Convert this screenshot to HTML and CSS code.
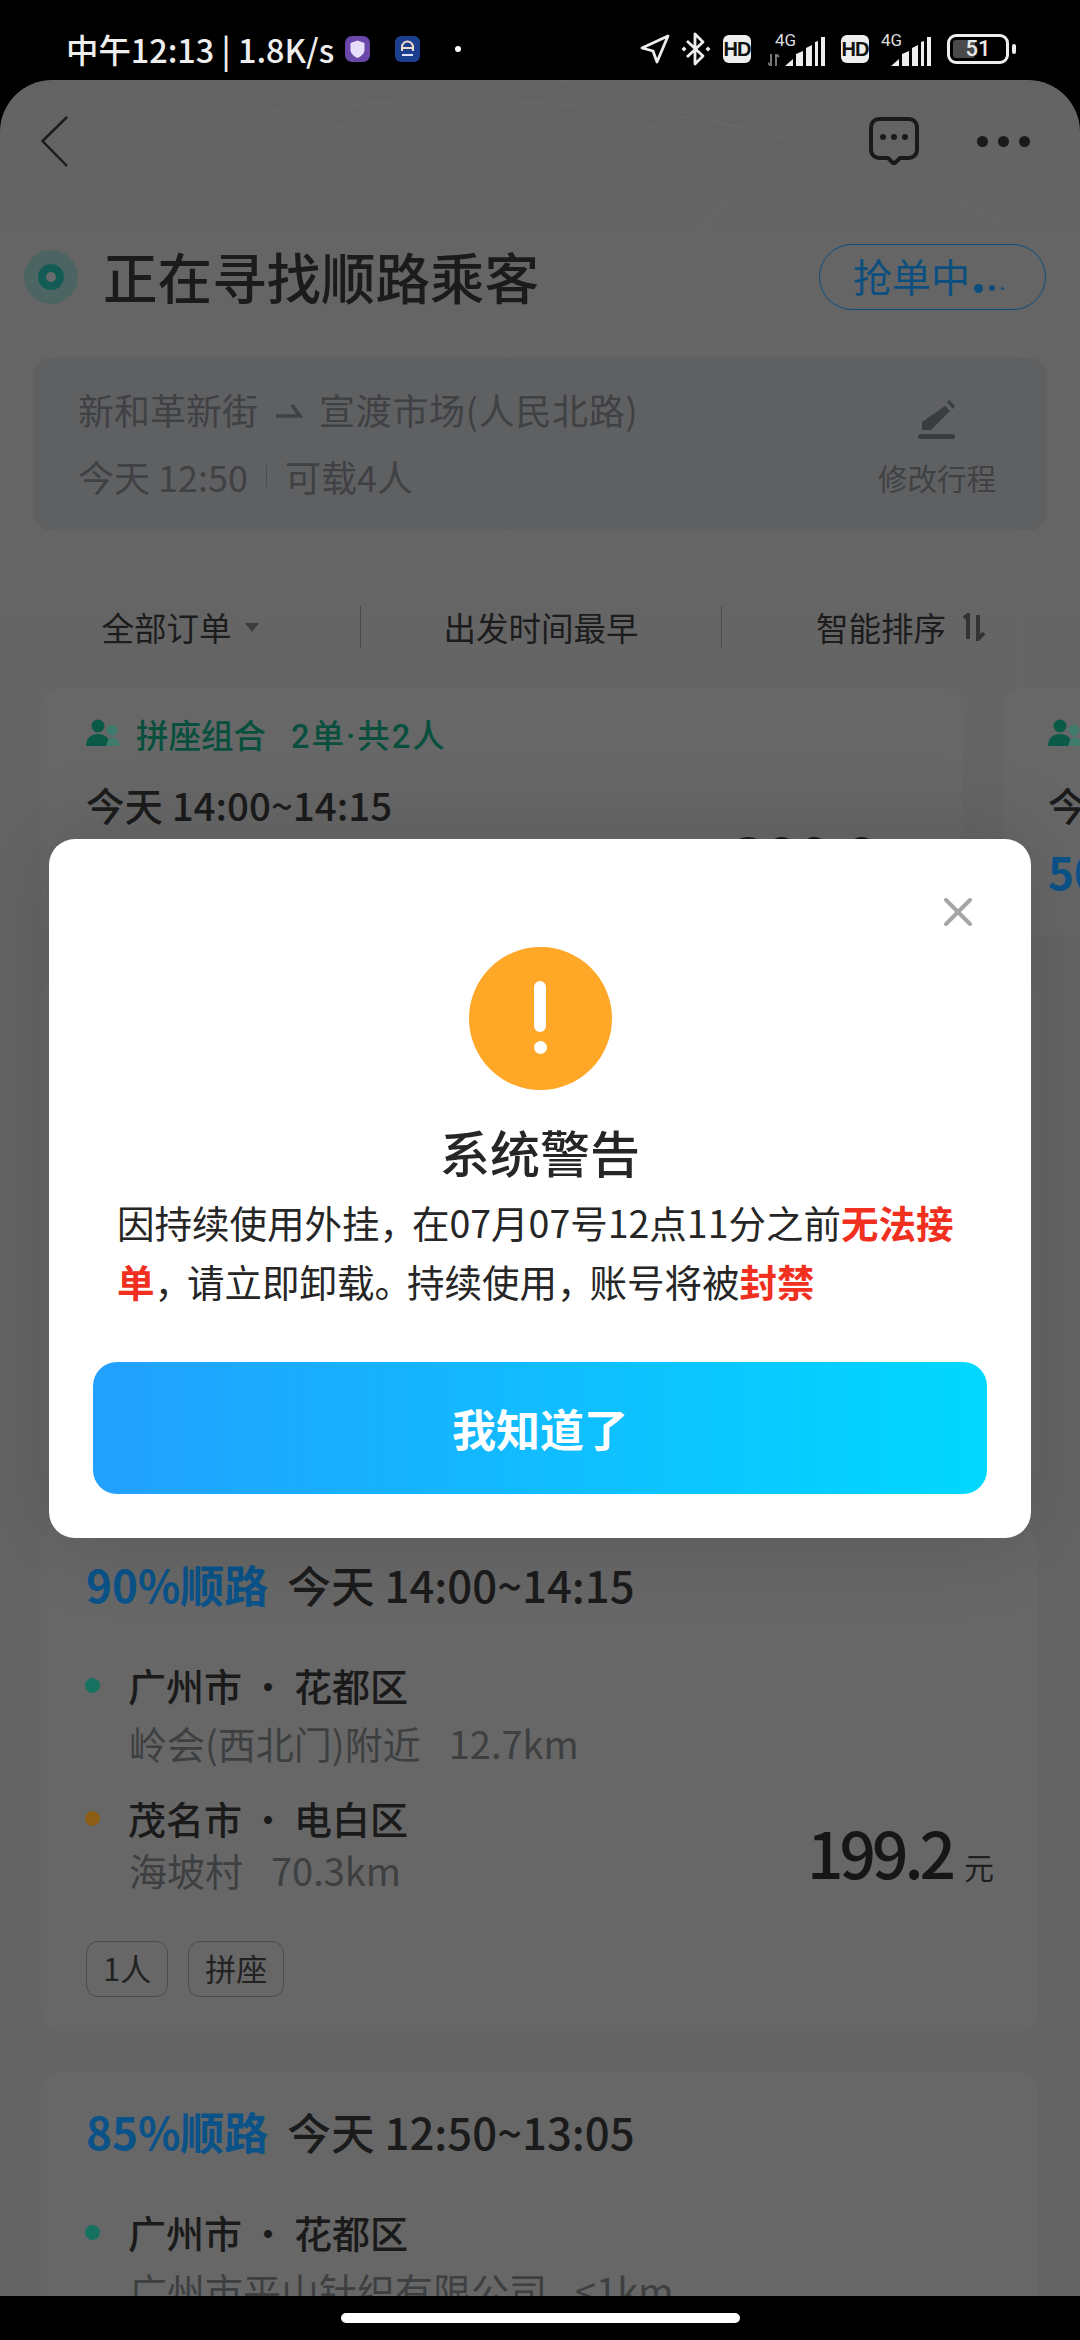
FILE: index.html
```html
<!DOCTYPE html>
<html lang="zh-CN">
<head>
<meta charset="utf-8">
<title>正在寻找顺路乘客</title>
<link rel="stylesheet" href="styles.css">
</head>
<body>
<div class="screen">
  <header class="status">
    <div class="status-left">
      <span class="status-time">中午12:13 | 1.8K/s</span>
      <svg class="app-icon shield-icon" viewBox="0 0 25 26"><rect width="25" height="26" rx="7" fill="#6a47a8"/><path d="M12.500 4.500 19.500 7v6.500c0 4-3 6.500-7 8.500-4-2-7-4.500-7-8.500V7z" fill="#e6defa"/></svg>
      <svg class="app-icon car-icon" viewBox="0 0 25 26"><rect width="25" height="26" rx="6" fill="#1c3f8f"/><path d="M7 15V11a5.500 5.500 0 0 1 11 0v4M7 12h11" fill="none" stroke="#f0dcc8" stroke-width="2"/><rect x="7" y="18" width="11" height="2" fill="#dfe6f5"/></svg>
      <span class="status-dot"></span>
    </div>
    <div class="status-right">
      <svg class="sicon loc" viewBox="0 0 30 30"><path d="M28 2 2 14l11 3 4 11z" fill="none" stroke="#eee" stroke-width="2.800" stroke-linejoin="round"/></svg>
      <svg class="sicon bt" viewBox="0 0 30 34"><path d="M6 9 22 24l-8 8V2l8 8L6 25" fill="none" stroke="#eee" stroke-width="2.800" stroke-linejoin="round"/><path d="M3 14.500 5.500 17 3 19.500.5 17zM27 14.500 29.500 17 27 19.500 24.500 17z" fill="#eee"/></svg>
      <span class="hd">HD</span>
      <div class="signal sig-first">
        <span class="net">4G</span>
        <svg class="updown" viewBox="0 0 12 12"><path d="M3 0v12L0 9M8 12V0l3 3" fill="none" stroke="#777" stroke-width="2"/></svg>
        <svg class="bars" viewBox="0 0 40 29"><path d="M0 29 8 22V29zM11 29V17l7-3V29zM21 29V11l6-3V29zM30 29V5l3-1V29zM36 29V0h4V29z" fill="#eee"/></svg>
      </div>
      <span class="hd hd-second">HD</span>
      <div class="signal sig-second">
        <span class="net">4G</span>
        <svg class="bars" viewBox="0 0 40 29"><path d="M0 29 8 22V29zM11 29V17l7-3V29zM21 29V11l6-3V29zM30 29V5l3-1V29zM36 29V0h4V29z" fill="#eee"/></svg>
      </div>
      <div class="battery"><span class="battery-fill"></span><span class="battery-num">51</span></div>
      <span class="battery-tip"></span>
    </div>
  </header>

  <main class="app">
    <svg class="map-lines" viewBox="0 0 1080 200" preserveAspectRatio="none"><path d="M190 0 100 80M190 40C360 20 500 10 700 40 820 60 900 100 1000 140M190 60C400 40 540 30 780 60M560 0 790 60M840 0 790 60 700 150M1040 0 990 110" fill="none" stroke="#666768" stroke-width="1.500"/></svg>
    <nav class="nav">
      <svg class="back" viewBox="0 0 27 51"><path d="M26 1 1.500 25 26 50" fill="none" stroke="#1c1c1c" stroke-width="2.500"/></svg>
      <div class="nav-actions">
        <svg class="chat" viewBox="0 0 50 48"><path d="M10 2h30a8 8 0 0 1 8 8v23a8 8 0 0 1-8 8h-9l-6 6-6-6h-9a8 8 0 0 1-8-8V10a8 8 0 0 1 8-8z" fill="none" stroke="#1a1a1a" stroke-width="4" stroke-linejoin="round"/><circle cx="14" cy="20" r="3" fill="#1a1a1a"/><circle cx="25" cy="20" r="3" fill="#1a1a1a"/><circle cx="36" cy="20" r="3" fill="#1a1a1a"/></svg>
        <div class="more"><span></span><span></span><span></span></div>
      </div>
    </nav>

    <section class="title-row">
      <span class="pulse"><span class="pulse-mid"><span class="pulse-core"></span></span></span>
      <h1 class="page-title">正在寻找顺路乘客</h1>
      <div class="grab">抢单中<span class="grab-dots"><i class="d1"></i><i class="d2"></i><i class="d3"></i></span></div>
    </section>

    <section class="trip">
      <div class="trip-info">
        <div class="trip-route"><span>新和革新街</span>
          <svg class="half-arrow" viewBox="0 0 28 16"><path d="M1 13h24L17 2" fill="none" stroke="#3f4143" stroke-width="3.500"/></svg>
          <span class="trip-to">宣渡市场(人民北路)</span></div>
        <div class="trip-meta"><span>今天 12:50</span><span class="trip-sep"></span><span>可载4人</span></div>
      </div>
      <div class="trip-edit">
        <svg class="pencil" viewBox="0 0 38 40"><path d="M27 6 32 11 13 30H4V22z" fill="#3a3c3e"/><path d="M29 2 31 0l6 6-2 3z" fill="#3a3c3e"/><rect y="34" width="37" height="5" rx="2.500" fill="#3a3c3e"/></svg>
        <span>修改行程</span>
      </div>
    </section>

    <section class="filters">
      <div class="filter">全部订单<span class="caret"></span></div>
      <div class="filter filter-line">出发时间最早</div>
      <div class="filter filter-line">智能排序
        <svg class="sort" viewBox="0 0 28 28"><path d="M6 5 10 2V26M20 2V26l6-6" fill="none" stroke="#333" stroke-width="4"/></svg>
      </div>
    </section>

    <section class="pool-row">
      <article class="pool-card">
        <div class="pool-main">
          <div class="pool-tag">
            <svg class="people" viewBox="0 0 34 28"><circle cx="12" cy="7" r="6.500" fill="#0a5a47"/><path d="M0 27c0-8 5-12 12-12s12 4 12 12z" fill="#0a5a47"/><circle cx="26" cy="11" r="5.500" fill="#3f7a6c"/><path d="M20 27c2-6 3-9 6-9s7 3 8 9z" fill="#3f7a6c"/></svg>
            <span>拼座组合</span><span class="pool-count">2单·共2人</span>
          </div>
          <div class="pool-time">今天 14:00~14:15</div>
        </div>
        <div class="pool-price"><span class="money">300.0</span><span class="yuan">元</span></div>
      </article>
      <article class="pool-card">
        <div class="pool-main">
          <div class="pool-tag">
            <svg class="people" viewBox="0 0 34 28"><circle cx="12" cy="7" r="6.500" fill="#0a5a47"/><path d="M0 27c0-8 5-12 12-12s12 4 12 12z" fill="#0a5a47"/><circle cx="26" cy="11" r="5.500" fill="#3f7a6c"/><path d="M20 27c2-6 3-9 6-9s7 3 8 9z" fill="#3f7a6c"/></svg>
            <span>拼座组合</span>
          </div>
          <div class="pool-time">今天 14:00~14:15</div>
          <div class="match match-peek">50%顺路</div>
        </div>
      </article>
    </section>

    <section class="orders">
      <article class="order order-hidden"></article>
      <article class="order">
        <div class="order-head"><span class="match">90%顺路</span><span class="order-time">今天 14:00~14:15</span></div>
        <div class="order-body">
          <div class="route">
            <div class="stop"><i class="pin pin-green"></i>广州市<b class="mid">·</b>花都区</div>
            <div class="addr">岭会(西北门)附近<span class="dist">12.7km</span></div>
            <div class="stop stop-next"><i class="pin pin-orange"></i>茂名市<b class="mid">·</b>电白区</div>
            <div class="addr addr-tight">海坡村<span class="dist">70.3km</span></div>
          </div>
          <div class="order-price"><span class="money">199.2</span><span class="yuan">元</span></div>
        </div>
        <div class="tags"><span class="tag">1人</span><span class="tag">拼座</span></div>
      </article>
      <article class="order">
        <div class="order-head"><span class="match">85%顺路</span><span class="order-time">今天 12:50~13:05</span></div>
        <div class="order-body">
          <div class="route">
            <div class="stop"><i class="pin pin-green"></i>广州市<b class="mid">·</b>花都区</div>
            <div class="addr">广州市平山针织有限公司<span class="dist">&lt;1km</span></div>
          </div>
        </div>
      </article>
    </section>

    <div class="overlay">
      <div class="dialog">
        <svg class="close" viewBox="0 0 28 28"><path d="M2 2 26 26M26 2 2 26" stroke="#a6a6a6" stroke-width="4" stroke-linecap="round"/></svg>
        <div class="warn"><span class="warn-bar"></span><span class="warn-dot"></span></div>
        <h2 class="dialog-title">系统警告</h2>
        <p class="dialog-text">因持续使用外挂<span class="punct">，</span>在07月07号12点11分之前<em>无法接单</em><span class="punct">，</span>请立即卸载<span class="punct">。</span>持续使用<span class="punct">，</span>账号将被<em>封禁</em></p>
        <button class="ok">我知道了</button>
      </div>
    </div>
  </main>

  <footer class="home"><span class="home-bar"></span></footer>
</div>
</body>
</html>
```

FILE: styles.css
```css
* { box-sizing: border-box; }
html, body { margin: 0; padding: 0; }
body { font-family: "Noto Sans CJK SC", "Noto Sans", sans-serif; background: #000; }
h1, h2, p { margin: 0; }
i, em { font-style: normal; }

.screen { width: 1080px; height: 2340px; background: #000; display: flex; flex-direction: column; overflow: hidden; }

/* status bar */
.status { height: 80px; flex: none; display: flex; justify-content: space-between; align-items: center; padding: 0 64px 0 66px; color: #eee; }
.status-left { display: flex; align-items: center; height: 50px; margin-top: 18px; }
.status-time { font-size: 32.400px; line-height: 50px; width: 279px; white-space: nowrap; font-weight: 500; }
.app-icon { width: 25px; height: 26px; }
.car-icon { margin-left: 25px; }
.status-dot { width: 6px; height: 6px; border-radius: 50%; background: #fff; margin-left: 35px; }
.status-right { display: flex; align-items: center; height: 40px; margin-top: 18px; }
.sicon.loc { width: 30px; height: 30px; }
.sicon.bt { width: 30px; height: 34px; margin-left: 11px; }
.hd { width: 28px; height: 28px; border-radius: 6px; background: #eee; color: #111; font: 700 20px/28px "Liberation Sans", sans-serif; text-align: center; margin-left: 12px; letter-spacing: -1px; }
.hd-second { margin-left: 16px; }
.signal { position: relative; width: 57px; height: 34px; }
.sig-first { margin-left: 17px; }
.sig-second { margin-left: 10px; }
.net { position: absolute; left: 7px; top: 0; font: 400 17px/16px "Roboto", sans-serif; color: #ddd; }
.sig-second .net { left: 2px; }
.updown { position: absolute; left: 0; bottom: 0; width: 12px; height: 12px; }
.bars { position: absolute; right: 0; bottom: 0; width: 40px; height: 29px; }
.sig-second .bars { right: 5px; }
.battery { position: relative; width: 62px; height: 30px; border: 3px solid #eee; border-radius: 9px; margin-left: 11px; display: flex; align-items: center; justify-content: center; }
.battery-fill { position: absolute; left: 3px; top: 3px; bottom: 3px; width: 22px; background: #4a4a4a; border-radius: 3px; }
.battery-num { position: relative; font: 500 22px/24px "Roboto", sans-serif; color: #e8e8e8; }
.battery-tip { width: 4px; height: 10px; border-radius: 2px; background: #eee; margin-left: 3px; }

/* app */
.app { height: 2216px; flex: none; position: relative; overflow: hidden; border-radius: 52px 52px 0 0; background: linear-gradient(#626364, #656565 170px, #646464); }
.map-lines { position: absolute; left: 0; top: 0; width: 1080px; height: 200px; }

.nav { position: relative; height: 122px; display: flex; align-items: center; justify-content: space-between; padding: 0 50px 0 41px; }
.back { width: 27px; height: 51px; }
.nav-actions { display: flex; align-items: center; gap: 58px; }
.chat { width: 50px; height: 48px; }
.more { display: flex; gap: 10px; }
.more span { width: 11px; height: 11px; border-radius: 50%; background: #1a1a1a; }

.title-row { position: relative; display: flex; align-items: center; height: 66px; margin-top: 42px; padding: 0 34px 0 24px; }
.pulse { width: 54px; height: 54px; border-radius: 50%; background: #4d6562; display: flex; align-items: center; justify-content: center; flex: none; }
.pulse-mid { width: 26px; height: 26px; border-radius: 50%; background: #135c55; display: flex; align-items: center; justify-content: center; }
.pulse-core { width: 10px; height: 10px; border-radius: 50%; background: #696a6a; }
.page-title { font-size: 54.500px; line-height: 66px; font-weight: 500; color: #1b1b1b; margin-left: 25px; margin-top: -3px; white-space: nowrap; }
.grab { margin-left: auto; width: 227px; height: 66px; border: 1.500px solid #0c4f7f; border-radius: 33px; color: #0c4f7f; font-size: 39px; line-height: 60px; padding-left: 33px; display: flex; }
.grab-dots { display: flex; align-items: center; gap: 6px; padding-top: 22px; margin-left: 4px; }
.grab-dots i { border-radius: 50%; background: #0c4f7f; display: block; }
.d1 { width: 9px; height: 9px; }
.d2 { width: 6px; height: 6px; }
.d3 { width: 3px; height: 3px; }

.trip { margin: 47px 33px 0; height: 174px; border-radius: 20px; background: #5f6062; padding: 30px 51px 0 45px; display: flex; justify-content: space-between; }
.trip-route { font-size: 36px; line-height: 44px; color: #3f4143; white-space: nowrap; display: flex; align-items: center; }
.half-arrow { width: 28px; height: 16px; margin: 4px 16px 0 17px; }
.trip-to { letter-spacing: .7px; }
.trip-meta { margin-top: 23px; font-size: 36px; line-height: 44px; color: #3f4143; display: flex; align-items: center; }
.trip-sep { width: 1px; height: 22px; background: #4a4c4e; margin: 0 18px; }
.trip-edit { width: 118px; display: flex; flex-direction: column; align-items: center; color: #3f4143; font-size: 29.500px; line-height: 40px; white-space: nowrap; padding-top: 13px; }
.pencil { width: 38px; height: 40px; margin-bottom: 17px; }

.filters { display: grid; grid-template-columns: 360px 361px 359px; height: 42px; margin-top: 75px; }
.filter { display: flex; align-items: center; justify-content: center; font-size: 32.500px; line-height: 42px; color: #1c1c1c; white-space: nowrap; }
.filter-line { border-left: 1.500px solid #4a4a4a; }
.caret { width: 0; height: 0; border-left: 7px solid transparent; border-right: 7px solid transparent; border-top: 9px solid #3c3c3c; margin-left: 13px; }
.sort { width: 28px; height: 28px; margin-left: 12px; }

.pool-row { display: flex; gap: 41px; height: 249px; margin-top: 40px; padding-left: 41px; }
.pool-card { flex: none; width: 921px; background: #676767; border-radius: 20px; padding: 23px 44px 0 45px; display: flex; justify-content: space-between; }
.pool-tag { display: flex; align-items: center; height: 44px; font-size: 32.500px; font-weight: 500; color: #084f3e; white-space: nowrap; }
.people { width: 34px; height: 28px; margin-right: 16px; }
.pool-count { margin-left: 25px; font-family: "Roboto", "Noto Sans CJK SC", sans-serif; letter-spacing: 2px; }
.pool-time { margin-top: 25px; font-size: 38.500px; line-height: 48px; font-weight: 500; color: #1b1b1b; white-space: nowrap; }
.match { font-size: 44px; font-weight: 700; line-height: 48px; color: #0a5288; white-space: nowrap; }
.match-peek { margin-top: 19px; }
.pool-price { display: flex; align-items: baseline; padding-top: 108px; }
.money { display: block; font-size: 64px; line-height: 76px; font-weight: 500; color: #161616; letter-spacing: -4px; }
.yuan { font-size: 30px; color: #1f1f1f; margin-left: 12px; }

.orders { display: flex; flex-direction: column; gap: 41px; margin: 40px 42px 0 41px; }
.order { background: #676767; border-radius: 20px; padding: 35px 44px 34px 45px; }
.order-hidden { height: 507px; flex: none; padding: 0; }
.order-head { display: flex; align-items: center; height: 48px; }
.order-time { font-size: 43.700px; line-height: 48px; font-weight: 500; color: #1b1b1b; margin-left: 19px; white-space: nowrap; }
.order-body { display: flex; justify-content: space-between; margin-top: 52px; }
.stop { font-size: 38px; line-height: 50px; color: #1a1a1a; display: flex; align-items: center; white-space: nowrap; font-weight: 500; }
.stop-next { margin-top: 28px; }
.pin { width: 15px; height: 15px; border-radius: 50%; margin: 0 28px 0 -1px; }
.pin-green { background: #167160; }
.pin-orange { background: #8c5d14; }
.mid { font-weight: 400; margin: 0 7px; }
.addr { margin: 11px 0 0 43px; font-size: 38px; line-height: 44px; color: #3d3f40; white-space: nowrap; }
.addr-tight { margin-top: 5px; }
.dist { margin-left: 28px; }
.order-price { display: flex; align-items: baseline; align-self: flex-end; margin-bottom: 3px; }
.tags { display: flex; gap: 20px; margin-top: 49px; }
.tag { height: 56px; padding: 0 16px; border: 1px solid #4b4b4b; border-radius: 12px; font-size: 31px; line-height: 52px; color: #222; }

/* dialog */
.overlay { position: absolute; inset: 0; display: flex; align-items: center; justify-content: center; }
.dialog { position: relative; width: 982px; height: 699px; background: #fff; border-radius: 26px; box-shadow: 0 0 90px rgba(0, 0, 0, .14); display: flex; flex-direction: column; align-items: center; padding-top: 108px; }
.close { position: absolute; top: 59px; right: 59px; width: 28px; height: 28px; }
.warn { width: 143px; height: 143px; border-radius: 50%; background: #ffa726; display: flex; flex-direction: column; align-items: center; padding-top: 34px; flex: none; }
.warn-bar { width: 12px; height: 51px; border-radius: 6px; background: #fff; }
.warn-dot { width: 13px; height: 13px; border-radius: 50%; background: #fff; margin-top: 9px; }
.dialog-title { font-size: 50px; line-height: 64px; font-weight: 500; color: #262626; margin-top: 29px; }
.dialog-text { width: 982px; padding: 0 68px; font-size: 37.500px; line-height: 59px; color: #262626; margin-top: 9px; }
.dialog-text em { color: #f1301f; font-weight: 700; }
.punct { letter-spacing: -5px; }
.ok { width: 894px; height: 132px; border: 0; border-radius: 24px; background: linear-gradient(90deg, #22a0ff, #00d8ff); color: #fff; font: 700 44px/132px "Noto Sans CJK SC", sans-serif; margin-top: 52px; padding: 0; flex: none; }

.home { flex: 1; display: flex; align-items: center; justify-content: center; }
.home-bar { width: 399px; height: 10px; border-radius: 5px; background: #fff; }
```
